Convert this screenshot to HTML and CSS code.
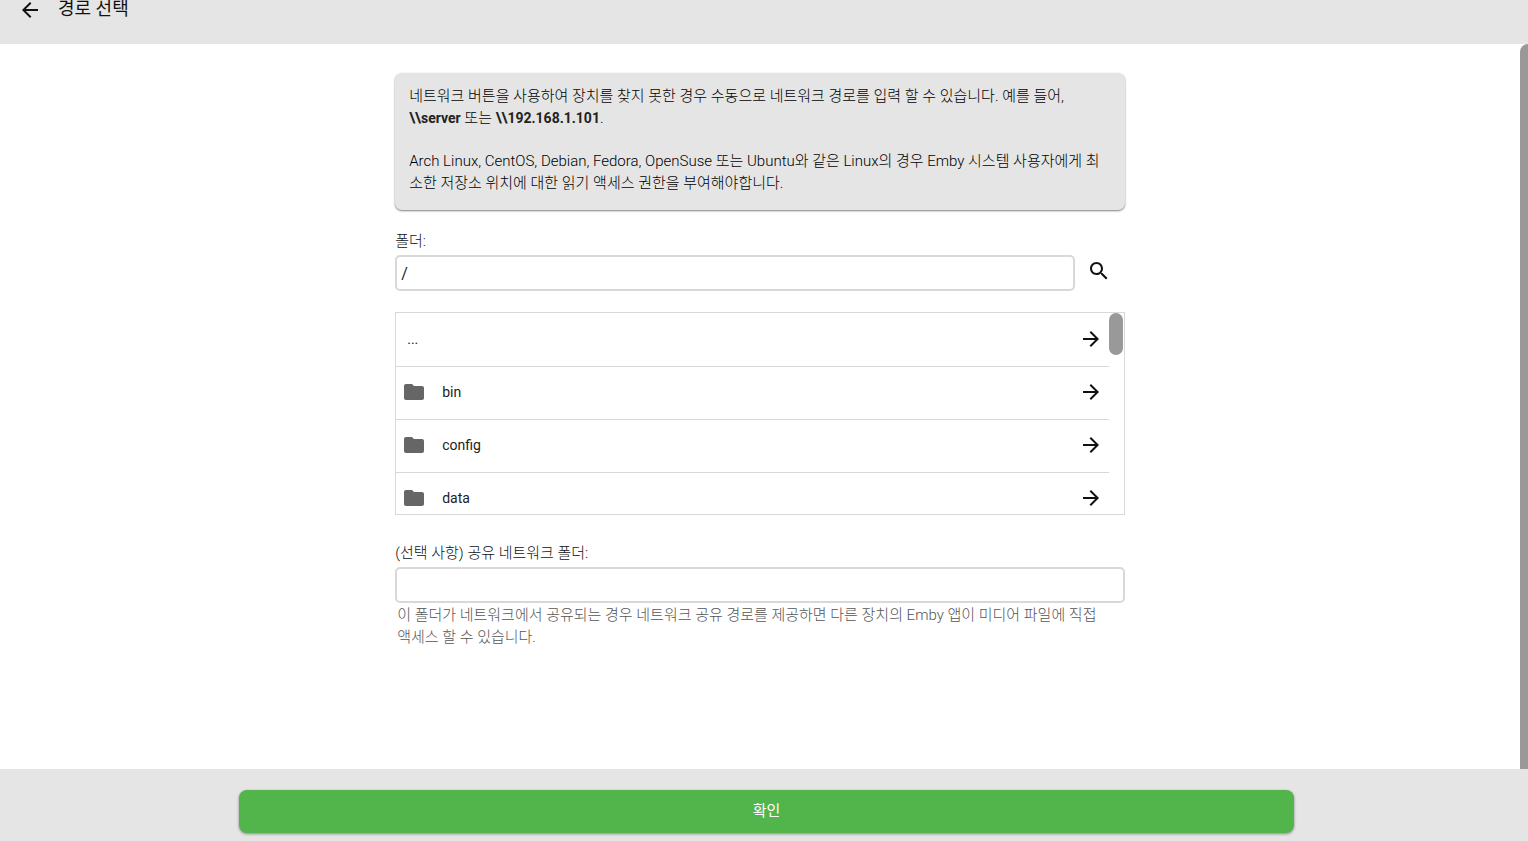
FILE: index.html
```html
<!DOCTYPE html>
<html lang="ko">
<head>
<meta charset="utf-8">
<title>경로 선택</title>
<link rel="stylesheet" href="styles.css">
</head>
<body>
<svg class="symbols" aria-hidden="true">
  <symbol id="back" viewBox="0 0 24 24"><path d="M20 11H7.830l5.590-5.590L12 4l-8 8 8 8 1.410-1.410L7.830 13H20v-2z"/></symbol>
  <symbol id="forward" viewBox="0 0 24 24"><path d="M12 4l-1.410 1.410L16.170 11H4v2h12.170l-5.580 5.590L12 20l8-8z"/></symbol>
  <symbol id="folder" viewBox="0 0 24 24"><path d="M10 4H4c-1.100 0-1.990.9-1.990 2L2 18c0 1.100.9 2 2 2h16c1.100 0 2-.9 2-2V8c0-1.100-.9-2-2-2h-8l-2-2z"/></symbol>
  <symbol id="search" viewBox="0 0 24 24"><path d="M15.500 14h-.79l-.28-.27C15.410 12.590 16 11.110 16 9.500 16 5.910 13.090 3 9.500 3S3 5.910 3 9.500 5.910 16 9.500 16c1.610 0 3.090-.59 4.230-1.570l.27.28v.79l5 4.990L20.490 19l-4.990-5zm-6 0C7.010 14 5 11.990 5 9.500S7.010 5 9.500 5 14 7.010 14 9.500 11.990 14 9.500 14z"/></symbol>
</svg>
<header class="header">
  <button class="icon-button" type="button" aria-label="뒤로"><svg class="icon"><use href="#back"/></svg></button>
  <h1 class="title">경로 선택</h1>
</header>
<main class="main">
  <div class="scroll-area">
    <form class="content" id="path-form">
      <section class="info">
        <p class="info-text">네트워크 버튼을 사용하여 장치를 찾지 못한 경우 수동으로 네트워크 경로를 입력 할 수 있습니다. 예를 들어, <br><b>\\server</b> 또는 <b>\\192.168.1.101</b>.</p>
        <p class="info-text">Arch Linux, CentOS, Debian, Fedora, OpenSuse 또는 Ubuntu와 같은 Linux의 경우 Emby 시스템 사용자에게 최<br>소한 저장소 위치에 대한 읽기 액세스 권한을 부여해야합니다.</p>
      </section>
      <label class="label" for="folder-path">폴더:</label>
      <div class="path-row">
        <input class="text-input" id="folder-path" type="text" value="/">
        <button class="icon-button search" type="button" aria-label="검색"><svg class="icon"><use href="#search"/></svg></button>
      </div>
      <div class="browser">
        <div class="folders">
          <button class="folder parent" type="button"><span class="name">...</span><svg class="icon"><use href="#forward"/></svg></button>
          <button class="folder" type="button"><svg class="icon folder-icon"><use href="#folder"/></svg><span class="name">bin</span><svg class="icon"><use href="#forward"/></svg></button>
          <button class="folder" type="button"><svg class="icon folder-icon"><use href="#folder"/></svg><span class="name">config</span><svg class="icon"><use href="#forward"/></svg></button>
          <button class="folder" type="button"><svg class="icon folder-icon"><use href="#folder"/></svg><span class="name">data</span><svg class="icon"><use href="#forward"/></svg></button>
        </div>
        <div class="list-track"><div class="list-thumb"></div></div>
      </div>
      <label class="label" for="network-path">(선택 사항) 공유 네트워크 폴더:</label>
      <input class="text-input" id="network-path" type="text" aria-describedby="network-help">
      <p class="help" id="network-help">이 폴더가 네트워크에서 공유되는 경우 네트워크 공유 경로를 제공하면 다른 장치의 Emby 앱이 미디어 파일에 직접<br>액세스 할 수 있습니다.</p>
    </form>
  </div>
  <div class="page-thumb"></div>
</main>
<footer class="footer">
  <button class="submit" type="submit" form="path-form">확인</button>
</footer>
</body>
</html>
```
FILE: styles.css
```css
* {
  box-sizing: border-box;
}

body {
  margin: 0;
  height: 100vh;
  display: flex;
  flex-direction: column;
  overflow: hidden;
  background: #fff;
  color: #222;
  font-family: Roboto, "Noto Sans CJK KR", sans-serif;
  font-size: 15px;
  line-height: 22px;
}

button,
input {
  font: inherit;
  color: inherit;
}

button {
  border: 0;
  padding: 0;
  background: none;
  cursor: pointer;
}

p {
  margin: 0;
}

.symbols {
  display: none;
}

.icon {
  width: 24px;
  height: 24px;
  flex: none;
  display: block;
  fill: #111;
}

.header {
  flex: none;
  display: flex;
  align-items: center;
  gap: 16px;
  padding: 0 18px 24px;
  height: 44px;
  background: #e5e5e5;
}

.title {
  margin: 0;
  padding-bottom: 2px;
  font-size: 18px;
  line-height: 20px;
  font-weight: 400;
  color: #111;
}

.main {
  flex: 1;
  min-height: 0;
  display: flex;
}

.scroll-area {
  flex: 1;
  overflow: hidden;
}

.page-thumb {
  width: 8px;
  background: #999;
  border-radius: 8px 0 0 0;
}

.content {
  width: 48%;
  margin: 0 auto;
  padding-top: 29px;
  display: flex;
  flex-direction: column;
}

.info {
  display: flex;
  flex-direction: column;
  gap: 21px;
  padding: 12px 14px 16px;
  margin-bottom: 20px;
  border-radius: 7px;
  background: #e5e5e5;
  box-shadow: 0 1px 2px rgba(0, 0, 0, 0.5);
  color: #000;
  font-weight: 300;
}

.info-text,
.help {
  white-space: nowrap;
}

.info b {
  font-size: 14px;
  font-weight: 700;
  color: #222;
}

.label {
  margin-bottom: 3px;
  color: #111;
  font-weight: 300;
}

.path-row {
  display: flex;
  align-items: center;
  gap: 12px;
  margin-bottom: 21px;
}

.text-input {
  width: 100%;
  height: 36px;
  padding: 0 4px;
  border: 2px solid #d8d8d8;
  border-radius: 5px;
  background: #fff;
  font-size: 16px;
}

.search {
  padding: 0 14px 4px 0;
}

.browser {
  display: flex;
  height: 203px;
  margin-bottom: 27px;
  border: 1px solid #d8d8d8;
}

.folders {
  flex: 1;
  overflow: hidden;
}

.folder {
  width: 100%;
  height: 53px;
  display: flex;
  align-items: center;
  gap: 16px;
  padding: 0 6px 2px;
  border-bottom: 1px solid #d8d8d8;
  font-size: 14px;
  text-align: left;
}

.parent {
  height: 54px;
  padding-left: 11px;
}

.folder-icon {
  fill: #666;
}

.name {
  flex: 1;
}

.list-track {
  width: 15px;
  padding-right: 1px;
}

.list-thumb {
  height: 42px;
  border-radius: 7px;
  background: #999;
}

.help {
  padding: 1px 2px;
  color: #555;
  font-weight: 300;
}

.footer {
  flex: none;
  padding: 21px 0 8px 5px;
  background: #e5e5e5;
  display: flex;
  justify-content: center;
}

.submit {
  width: 1055px;
  width: calc(69% + 4px);
  height: 43px;
  padding-bottom: 2px;
  border-radius: 8px;
  background: #52b54b;
  box-shadow: 0 1px 3px rgba(0, 0, 0, 0.4);
  color: #fff;
  font-weight: 400;
}
```
